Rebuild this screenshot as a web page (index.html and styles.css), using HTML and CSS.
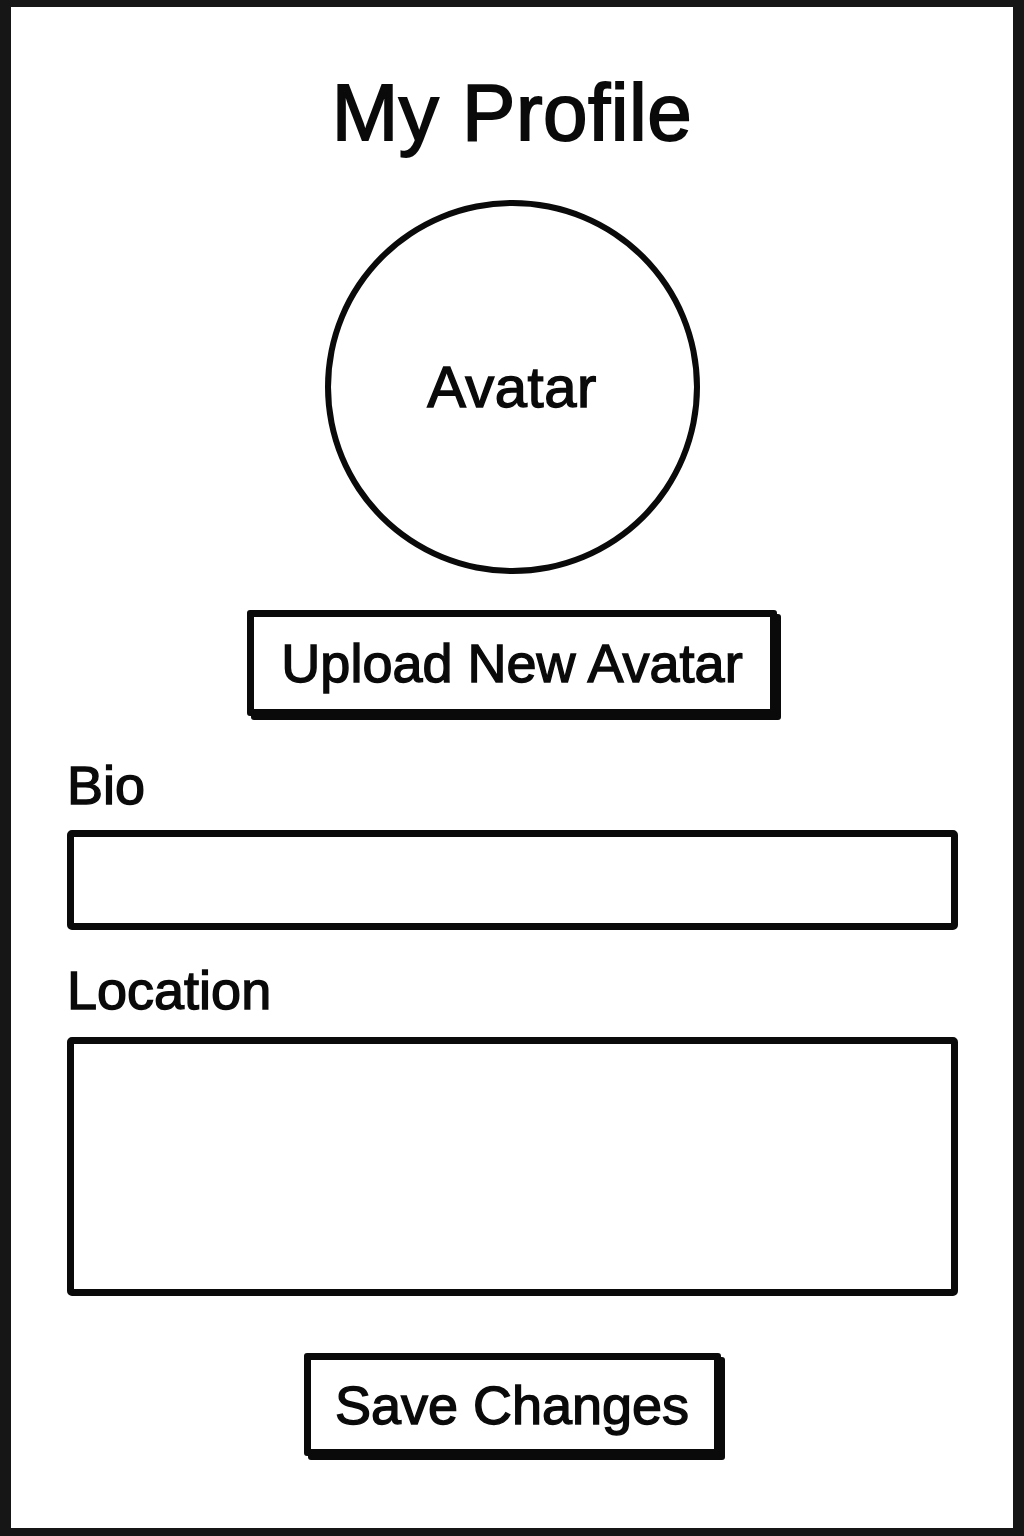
FILE: index.html
```html
<!DOCTYPE html>
<html lang="en">
<head>
<meta charset="utf-8">
<title>My Profile</title>
<link rel="stylesheet" href="styles.css">
</head>
<body>
<div class="frame">
  <h1 class="title">My Profile</h1>
  <div class="avatar">Avatar</div>
  <button class="btn btn-upload">Upload New Avatar</button>
  <div class="form">
    <label class="label label-bio" for="bio">Bio</label>
    <div class="field field-bio" id="bio"></div>
    <label class="label label-location" for="location">Location</label>
    <div class="field field-location" id="location"></div>
  </div>
  <button class="btn btn-save">Save Changes</button>
</div>
</body>
</html>
```
FILE: styles.css
```css
* { box-sizing: border-box; }
html, body { margin: 0; padding: 0; background: #fff; }
body {
  font-family: "Liberation Sans", Arial, sans-serif;
  color: #0a0a0a;
}
.frame {
  width: 1024px;
  height: 1536px;
  border-style: solid;
  border-color: #161616;
  border-width: 7px 11px 8px 11px;
  background: #fff;
  display: flex;
  flex-direction: column;
  align-items: center;
}
.title {
  margin: 66px 0 0 0;
  font-size: 80px;
  line-height: 1;
  font-weight: 400;
  letter-spacing: 0.5px;
  -webkit-text-stroke: 1.8px #0a0a0a;
}
.avatar {
  margin-top: 47px;
  width: 375px;
  height: 374px;
  border: 6px solid #0a0a0a;
  border-radius: 50%;
  display: flex;
  align-items: center;
  justify-content: center;
  font-size: 58px;
  line-height: 1;
  letter-spacing: 0.5px;
  -webkit-text-stroke: 1.4px #0a0a0a;
}
.btn {
  font-family: inherit;
  color: #0a0a0a;
  background: #fff;
  border: 7px solid #0a0a0a;
  border-radius: 3px;
  box-shadow: 4px 4px 0 #0a0a0a;
  font-size: 54px;
  line-height: 1;
  padding: 0;
  display: flex;
  align-items: center;
  justify-content: center;
  -webkit-text-stroke: 1.4px #0a0a0a;
}
.btn-upload {
  margin-top: 36px;
  width: 530px;
  height: 106px;
}
.form {
  align-self: stretch;
  padding: 0 55px 0 56px;
  display: flex;
  flex-direction: column;
}
.label {
  font-size: 54px;
  line-height: 1;
  -webkit-text-stroke: 1.4px #0a0a0a;
}
.label-bio { margin-top: 42px; }
.label-location { margin-top: 33px; }
.field {
  border: 7px solid #0a0a0a;
  border-radius: 5px;
  background: #fff;
}
.field-bio { margin-top: 18px; height: 100px; }
.field-location { margin-top: 20px; height: 259px; }
.btn-save {
  margin-top: 57px;
  width: 417px;
  height: 103px;
}
```
